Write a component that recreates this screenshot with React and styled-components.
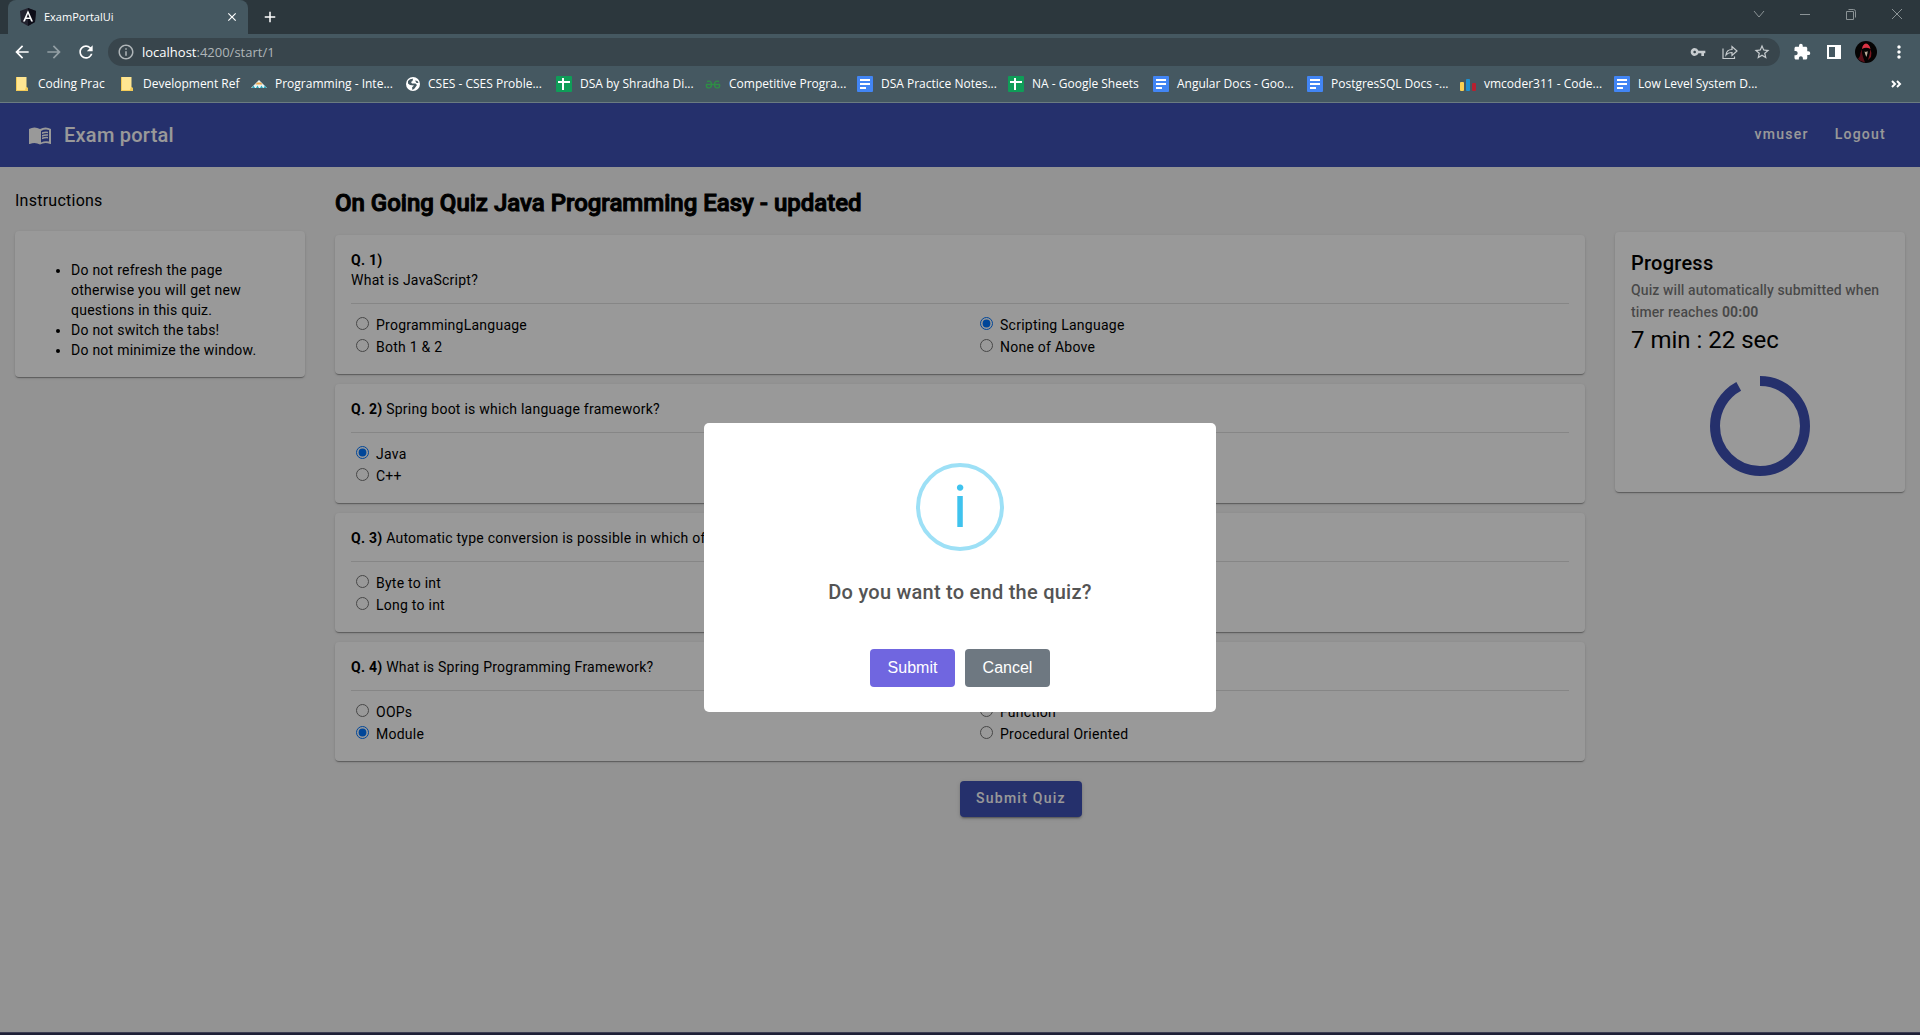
import React, { useState } from "react";
import styled, { createGlobalStyle } from "styled-components";
import {
  MdArrowBack, MdArrowForward, MdRefresh, MdInfoOutline, MdVpnKey,
  MdStarBorder, MdExtension, MdMoreVert, MdClose, MdAdd,
} from "react-icons/md";

const GlobalStyle = createGlobalStyle`
  *, *::before, *::after { box-sizing: border-box; }
  body {
    margin: 0;
    font-family: Roboto, "Liberation Sans", sans-serif;
    font-size: 14px;
    line-height: 20px;
    letter-spacing: 0.0178em;
    color: #000;
  }
  button, input { font: inherit; letter-spacing: inherit; }
`;

const Window = styled.div`
  display: flex;
  flex-direction: column;
  min-height: 100vh;
`;

/* ---------- browser chrome ---------- */

const Chrome = styled.header`
  background: #455861;
  border-bottom: 1px solid #6b7b80;
  color: #fff;
  font-family: "Open Sans", "Noto Sans", sans-serif;
  font-size: 12px;
  line-height: 16px;
  letter-spacing: normal;
`;

const TabStrip = styled.div`
  display: flex;
  align-items: center;
  height: 34px;
  padding-left: 8px;
  background: #2c373d;
  font-size: 11px;
`;

const Tab = styled.div`
  display: flex;
  align-items: center;
  gap: 8px;
  width: 240px;
  height: 34px;
  padding: 0 8px 0 12px;
  border-radius: 8px 8px 0 0;
  background: #455861;
`;

const TabTitle = styled.span`
  flex: 1;
`;

const IconButton = styled.button`
  display: inline-flex;
  align-items: center;
  justify-content: center;
  width: ${(p) => p.$width || 32}px;
  height: 28px;
  padding: 0;
  border: 0;
  background: none;
  color: ${(p) => p.$color || "#fff"};
`;

const WindowControls = styled.div`
  display: flex;
  margin-left: auto;
  height: 28px;
  align-self: flex-start;
`;

const Toolbar = styled.div`
  display: flex;
  align-items: center;
  height: 32px;
  padding: 4px 3px 0 6px;
`;

const AddressBar = styled.div`
  display: flex;
  flex: 1;
  align-items: center;
  height: 28px;
  margin: 0 8px 0 6px;
  padding: 0 2px 0 9px;
  border-radius: 14px;
  background: #38454c;
  font-size: 13px;
`;

const Host = styled.label`
  margin-left: 7px;
`;

const PathInput = styled.input`
  flex: 1;
  min-width: 0;
  padding: 0;
  border: 0;
  outline: 0;
  background: none;
  color: #afb5b8;
`;

const Bookmarks = styled.nav`
  display: flex;
  align-items: center;
  height: 36px;
  padding-left: 14px;
`;

const Bookmark = styled.a`
  display: flex;
  flex: none;
  align-items: center;
  gap: 8px;
  width: ${(p) => p.$width}px;
  color: #fff;
  text-decoration: none;
  white-space: nowrap;

  svg { flex: none; }
`;

const Overflow = styled(IconButton)`
  margin-left: auto;
  margin-right: 8px;
`;

/* ---------- page ---------- */

const Page = styled.div`
  position: relative;
  display: flex;
  flex: 1;
  flex-direction: column;
  background: #f5f5f5;
`;

const AppBar = styled.div`
  display: flex;
  align-items: center;
  height: 64px;
  padding: 0 21px 0 28px;
  background: #3f51b5;
  color: #fff;
`;

const Brand = styled.a`
  display: flex;
  align-items: center;
  gap: 12px;
  margin-right: auto;
  color: inherit;
  font-size: 20px;
  font-weight: 500;
  line-height: 32px;
  letter-spacing: 0.0125em;
  text-decoration: none;
`;

const NavButton = styled.button`
  height: 36px;
  padding: 0 13px 2px;
  border: 0;
  background: none;
  color: inherit;
  font-weight: 500;
  letter-spacing: 0.0893em;
`;

const Columns = styled.main`
  display: grid;
  grid-template-columns: minmax(0, 2fr) minmax(0, 8fr) minmax(0, 2fr);
`;

const Column = styled.section`
  padding: 20px 15px;
`;

const SideColumn = styled(Column)`
  padding-top: 65px;
`;

const Card = styled.div`
  padding: 15px 16px 16px;
  border-radius: 4px;
  background: #fff;
  box-shadow: 0 2px 1px -1px rgba(0, 0, 0, 0.2), 0 1px 1px rgba(0, 0, 0, 0.14),
    0 1px 3px rgba(0, 0, 0, 0.12);
`;

const InstructionsTitle = styled.h2`
  margin: 0 0 16px;
  font-size: 16px;
  font-weight: 400;
  line-height: 28px;
`;

const InstructionList = styled.ul`
  margin: 14px 0 0;
  padding: 0 0 1px 40px;
`;

const QuizTitle = styled.h1`
  margin: 0 0 16px;
  font-size: 24px;
  font-weight: 500;
  line-height: 32px;
  letter-spacing: normal;
  -webkit-text-stroke: 1px #000;
`;

const Questions = styled.div`
  display: flex;
  flex-direction: column;
  gap: 10px;
`;

const Prompt = styled.p`
  margin: 0;
  padding-bottom: 13px;
  border-bottom: 1px solid rgba(0, 0, 0, 0.12);
`;

const Options = styled.div`
  display: grid;
  grid-template-columns: repeat(2, minmax(0, 1fr));
  column-gap: 30px;
  padding-top: 10px;
`;

const Option = styled.label`
  display: block;
  line-height: 22px;

  input { margin: 3px 7px 0 5px; }
`;

const SubmitQuiz = styled.button`
  height: 36px;
  margin: 20px 0 0 50%;
  padding: 0 16px 2px;
  border: 0;
  border-radius: 4px;
  background: #3f51b5;
  box-shadow: 0 3px 1px -2px rgba(0, 0, 0, 0.2), 0 2px 2px rgba(0, 0, 0, 0.14),
    0 1px 5px rgba(0, 0, 0, 0.12);
  color: #fff;
  font-weight: 500;
  letter-spacing: 0.0893em;
`;

const ProgressTitle = styled.h2`
  margin: 0;
  font-size: 20px;
  font-weight: 500;
  line-height: 32px;
  letter-spacing: 0.0125em;
`;

const ProgressNote = styled.p`
  margin: 0;
  color: rgba(0, 0, 0, 0.54);
  font-weight: 500;
  line-height: 22px;
  letter-spacing: 0.0071em;
`;

const TimeLeft = styled.p`
  margin: 0 0 19px;
  font-size: 24px;
  line-height: 34px;
  letter-spacing: normal;
`;

const Ring = styled.svg`
  display: block;
  margin: 0 auto;
`;

/* ---------- confirmation dialog ---------- */

const Backdrop = styled.div`
  position: absolute;
  inset: 0;
  display: flex;
  align-items: center;
  justify-content: center;
  background: rgba(0, 0, 0, 0.4);
`;

const Dialog = styled.div`
  display: flex;
  flex-direction: column;
  align-items: center;
  width: 512px;
  max-width: 100%;
  padding: 40px 20px 25px;
  border-radius: 5px;
  background: #fff;
`;

const InfoMark = styled.div`
  display: flex;
  align-items: center;
  justify-content: center;
  width: 88px;
  height: 88px;
  border: 4px solid #9de0f6;
  border-radius: 50%;
  color: #3fc3ee;
  font-size: 60px;
  line-height: 80px;
  letter-spacing: normal;
`;

const DialogTitle = styled.h2`
  margin: 25px 0 41px;
  color: #545454;
  font-size: 20px;
  font-weight: 500;
  line-height: 32px;
  letter-spacing: 0.0125em;
`;

const Actions = styled.div`
  display: flex;
  gap: 10px;
`;

const ActionButton = styled.button`
  width: 85px;
  height: 38px;
  padding: 0;
  border: 0;
  border-radius: 4px;
  background: ${(p) => (p.$primary ? "#7066e0" : "#6e7881")};
  color: #fff;
  font-family: "Liberation Sans", Arial, sans-serif;
  font-size: 16px;
  letter-spacing: normal;
`;

const Taskbar = styled.footer`
  height: 3px;
  border-top: 1px solid #3c3c52;
  background: #1f2036;
`;

/* ---------- drawings ---------- */

const BookIcon = () => (
  <svg width="24" height="24" viewBox="0 0 24 24" fill="currentColor" aria-hidden="true">
    <path d="M12 6Q6.500 3 1 6V20.700Q1.200 21.200 1.700 21.100Q7 18.700 12 21.500Z" />
    <path
      fillRule="evenodd"
      d="M12 6Q17.500 3 23 6V20.700Q22.800 21.200 22.300 21.100Q17 18.700 12 21.500ZM13 8V19.500Q17 17.500 21 18.500V7Q17 5.800 13 8Z"
    />
    <path d="M14 9.300Q17 8.200 20 8.700v1.500Q17 9.800 14 11ZM14 12Q17 10.900 20 11.300v1.500Q17 12.500 14 13.700ZM14 14.600Q17 13.500 20 13.900v1.500Q17 15.100 14 16.300Z" />
  </svg>
);

const AngularIcon = () => (
  <svg width="16" height="20" viewBox="0 0 16 20" aria-hidden="true">
    <path d="M8 1 16 4 15 15 8 19 1 15 0 4Z" fill="#23232f" />
    <path d="M8 1 16 4 15 15 8 19Z" fill="#0d0d18" />
    <path d="M8 3.200 3 14.500h1.900l1-2.500h4.200l1 2.500H13ZM8 6.700l1.500 3.700h-3Z" fill="#fff" fillRule="evenodd" />
  </svg>
);

const FolderIcon = () => (
  <svg width="16" height="16" viewBox="0 0 16 16" aria-hidden="true">
    <path d="M2 1h10.500v10L14 12.500V15H2Z" fill="#ffe692" />
    <path d="M2 1h1v14H2ZM2 14h9l1-3h1l1 1.500V15H2Z" fill="#f3cb57" />
  </svg>
);

const PeakIcon = () => (
  <svg width="16" height="16" viewBox="0 0 16 16" aria-hidden="true">
    <path d="M8 4 16 12H0Z" fill="#e8f4f5" />
    <path d="M6 6.500h4l1.500 2h-7Z" fill="#f0a54a" />
    <path d="M1 12l1.500-2.500L4 12ZM5 12l1.500-2.500L8 12ZM9 12l1.500-2.500L12 12ZM12.500 12l1.500-2.500L15.500 12Z" fill="#2aa7bd" />
  </svg>
);

const GlobeIcon = () => (
  <svg width="16" height="16" viewBox="0 0 16 16" aria-hidden="true">
    <circle cx="9" cy="8" r="7" fill="#fff" />
    <path d="M4 5Q6 2.500 9 2.700L8.500 5 7 6l1 1.500h3.500L13 9l-2.500 3.500L8.500 14 8 11.500l2-2L6 9 4 7.500Z" fill="#455861" />
    <path d="M11 4.500l2.500.5 1 2h-2Z" fill="#455861" />
  </svg>
);

const SheetIcon = () => (
  <svg width="16" height="16" viewBox="0 0 16 16" aria-hidden="true">
    <rect width="16" height="16" rx="1" fill="#0f9d58" />
    <path d="M6 2h2v3h6v2H8v7H6V7H2V5h4Z" fill="#fff" />
  </svg>
);

const DocIcon = () => (
  <svg width="16" height="16" viewBox="0 0 16 16" aria-hidden="true">
    <rect width="16" height="16" rx="1" fill="#4285f4" />
    <path d="M3 3h10v2H3ZM3 7h10v2H3ZM3 11h6v2H3Z" fill="#fff" />
  </svg>
);

const GeeksIcon = () => (
  <svg width="16" height="16" viewBox="0 0 16 16" aria-hidden="true" fill="none" stroke="#2f8d46" strokeWidth="1.500">
    <path d="M2 5.500Q6.500 4 6.500 8.500T2 11.500Q1 10 1.500 8.500M14 5.500Q9.500 4 9.500 8.500T14 11.500Q15 10 14.500 8.500M1 8.500h14" />
  </svg>
);

const BarsIcon = () => (
  <svg width="16" height="16" viewBox="0 0 16 16" aria-hidden="true">
    <rect x="0" y="6" width="4" height="9" rx="1" fill="#fbcf4f" />
    <rect x="6" y="3" width="4" height="12" rx="1" fill="#1f8fce" />
    <rect x="12" y="7" width="4" height="8" rx="1" fill="#b8202f" />
  </svg>
);

const ShareIcon = () => (
  <svg width="16" height="16" viewBox="0 0 16 16" fill="none" stroke="currentColor" strokeWidth="1.200" aria-hidden="true">
    <path d="M1 4.500v10h11.500v-2M4 11Q4.500 5.500 10 5.500V2.500L15 7l-5 4.500V8.500Q6 8.500 4 11Z" />
  </svg>
);

const SidePanelIcon = () => (
  <svg width="16" height="16" viewBox="0 0 16 16" aria-hidden="true">
    <path d="M1 1h14v14H1ZM3 3v10h6V3Z" fill="currentColor" fillRule="evenodd" />
  </svg>
);

const Avatar = () => (
  <svg width="22" height="22" viewBox="0 0 22 22" aria-hidden="true">
    <circle cx="11" cy="11" r="11" fill="#050303" />
    <path d="M7 8Q7.500 3 11 2.500Q14.500 3 15.500 8Q11 5.500 7 8Z" fill="#d93444" />
    <path d="M7 8Q5 12 5 15L3 18q3 3 7 3.500L8 16Q6.500 12 7 8Z" fill="#5a0f18" />
    <path d="M15.500 8q1.500 4 .5 8l-3 3 1.500-5Z" fill="#7d1820" />
    <path d="M9.500 10.500l1.500.5 1.500-1v2l-1 4-1-2Z" fill="#b9aa98" />
  </svg>
);

const Stroke = ({ d, width = 1 }) => (
  <svg width="12" height="12" viewBox="0 0 12 12" fill="none" stroke="currentColor" strokeWidth={width} aria-hidden="true">
    <path d={d} />
  </svg>
);

/* ---------- data ---------- */

const bookmarks = [
  ["Coding Prac", FolderIcon, 105],
  ["Development Ref", FolderIcon, 132],
  ["Programming - Inte...", PeakIcon, 153],
  ["CSES - CSES Proble...", GlobeIcon, 152],
  ["DSA by Shradha Di...", SheetIcon, 149],
  ["Competitive Progra...", GeeksIcon, 152],
  ["DSA Practice Notes...", DocIcon, 151],
  ["NA - Google Sheets", SheetIcon, 145],
  ["Angular Docs - Goo...", DocIcon, 154],
  ["PostgresSQL Docs -...", DocIcon, 153],
  ["vmcoder311 - Code...", BarsIcon, 154],
  ["Low Level System D...", DocIcon, 154],
];

const questions = [
  {
    text: "What is JavaScript?", block: true, chosen: "Scripting Language",
    options: ["ProgrammingLanguage", "Scripting Language", "Both 1 & 2", "None of Above"],
  },
  { text: "Spring boot is which language framework?", chosen: "Java", options: ["Java", null, "C++", null] },
  { text: "Automatic type conversion is possible in which of", options: ["Byte to int", null, "Long to int", null] },
  {
    text: "What is Spring Programming Framework?", chosen: "Module",
    options: ["OOPs", "Function", "Module", "Procedural Oriented"],
  },
];

const RADIUS = 45;
const LENGTH = 2 * Math.PI * RADIUS;

function Question({ index, question }) {
  const [chosen, setChosen] = useState(question.chosen);
  return (
    <Card>
      <Prompt>
        <b>Q. {index + 1})</b>
        {question.block ? <br /> : " "}
        {question.text}
      </Prompt>
      <Options>
        {question.options.map((option, i) =>
          option ? (
            <Option key={i}>
              <input
                type="radio"
                name={`q${index}`}
                checked={chosen === option}
                onChange={() => setChosen(option)}
              />
              {option}
            </Option>
          ) : (
            <span key={i} />
          )
        )}
      </Options>
    </Card>
  );
}

function BrowserChrome() {
  return (
    <Chrome>
      <TabStrip>
        <Tab>
          <AngularIcon />
          <TabTitle>ExamPortalUi</TabTitle>
          <IconButton $width={16} aria-label="Close tab"><MdClose size={14} /></IconButton>
        </Tab>
        <IconButton $width={44} aria-label="New tab"><MdAdd size={18} /></IconButton>
        <WindowControls>
          <IconButton $width={46} $color="#8b9396" aria-label="Search tabs"><Stroke d="M1 3l5 6 5-6" /></IconButton>
          <IconButton $width={46} $color="#8b9396" aria-label="Minimize"><Stroke d="M1 6.500h10" /></IconButton>
          <IconButton $width={46} $color="#8b9396" aria-label="Restore"><Stroke d="M1.500 3.500h7v8h-7ZM3.500 1.500h5q2 0 2 2v6" /></IconButton>
          <IconButton $width={46} $color="#8b9396" aria-label="Close"><Stroke d="M1 1l10 10M11 1L1 11" /></IconButton>
        </WindowControls>
      </TabStrip>
      <Toolbar>
        <IconButton aria-label="Back"><MdArrowBack size={20} /></IconButton>
        <IconButton $color="#939fa4" aria-label="Forward"><MdArrowForward size={20} /></IconButton>
        <IconButton aria-label="Reload"><MdRefresh size={20} /></IconButton>
        <AddressBar>
          <MdInfoOutline size={18} color="#afb5b8" />
          <Host htmlFor="address">localhost</Host>
          <PathInput id="address" defaultValue=":4200/start/1" />
          <IconButton $color="#c7cccf" aria-label="Passwords"><MdVpnKey size={16} /></IconButton>
          <IconButton $color="#c7cccf" aria-label="Share"><ShareIcon /></IconButton>
          <IconButton $color="#c7cccf" aria-label="Bookmark this page"><MdStarBorder size={18} /></IconButton>
        </AddressBar>
        <IconButton $width={28} aria-label="Extensions"><MdExtension size={18} /></IconButton>
        <IconButton $width={36} aria-label="Side panel"><SidePanelIcon /></IconButton>
        <IconButton $width={28} aria-label="Profile"><Avatar /></IconButton>
        <IconButton $width={37} aria-label="Menu"><MdMoreVert size={20} /></IconButton>
      </Toolbar>
      <Bookmarks>
        {bookmarks.map(([label, Icon, width]) => (
          <Bookmark key={label} href="#" $width={width}>
            <Icon />
            {label}
          </Bookmark>
        ))}
        <Overflow aria-label="More bookmarks">
          <Stroke d="M2 3l3 3-3 3M7 3l3 3-3 3" width={2} />
        </Overflow>
      </Bookmarks>
    </Chrome>
  );
}

export default function App() {
  return (
    <Window>
      <GlobalStyle />
      <BrowserChrome />
      <Page>
        <AppBar>
          <Brand href="#"><BookIcon />Exam portal</Brand>
          <NavButton>vmuser</NavButton>
          <NavButton>Logout</NavButton>
        </AppBar>
        <Columns>
          <Column>
            <InstructionsTitle>Instructions</InstructionsTitle>
            <Card>
              <InstructionList>
                <li>Do not refresh the page otherwise you will get new questions in this quiz.</li>
                <li>Do not switch the tabs!</li>
                <li>Do not minimize the window.</li>
              </InstructionList>
            </Card>
          </Column>
          <Column>
            <QuizTitle>On Going Quiz Java Programming Easy - updated</QuizTitle>
            <Questions>
              {questions.map((question, i) => (
                <Question key={question.text} index={i} question={question} />
              ))}
            </Questions>
            <SubmitQuiz>Submit Quiz</SubmitQuiz>
          </Column>
          <SideColumn>
            <Card>
              <ProgressTitle>Progress</ProgressTitle>
              <ProgressNote>
                Quiz will automatically submitted when timer reaches <b>00:00</b>
              </ProgressNote>
              <TimeLeft>7 min : 22 sec</TimeLeft>
              <Ring width="100" height="100" viewBox="0 0 100 100" role="img" aria-label="Time left">
                <circle
                  cx="50" cy="50" r={RADIUS} fill="none" stroke="#3f51b5" strokeWidth="10"
                  strokeDasharray={`${LENGTH * 0.92} ${LENGTH}`} transform="rotate(-90 50 50)"
                />
              </Ring>
            </Card>
          </SideColumn>
        </Columns>
        <Backdrop>
          <Dialog role="dialog" aria-modal="true" aria-labelledby="dialog-title">
            <InfoMark>i</InfoMark>
            <DialogTitle id="dialog-title">Do you want to end the quiz?</DialogTitle>
            <Actions>
              <ActionButton $primary>Submit</ActionButton>
              <ActionButton>Cancel</ActionButton>
            </Actions>
          </Dialog>
        </Backdrop>
      </Page>
      <Taskbar />
    </Window>
  );
}
